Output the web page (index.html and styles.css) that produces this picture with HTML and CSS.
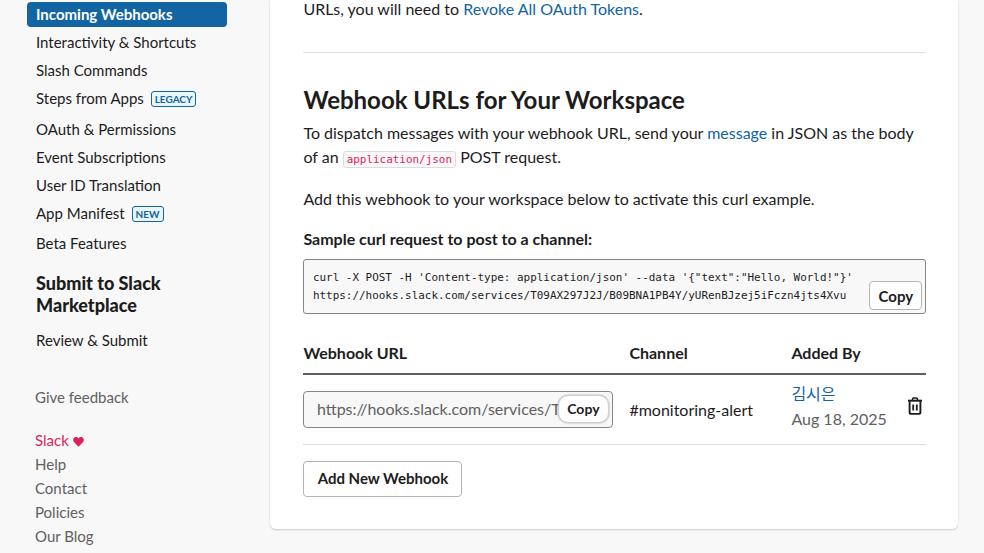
FILE: index.html
```html
<!DOCTYPE html>
<html lang="en">
<head>
    <meta charset="UTF-8">
    <title>Incoming Webhooks</title>
    <link rel="stylesheet" href="styles.css">
</head>
<body>
    <nav class="sidebar">
        <ul class="nav-list">
            <li><a class="nav-link active">Incoming Webhooks</a></li>
            <li><a class="nav-link">Interactivity &amp; Shortcuts</a></li>
            <li><a class="nav-link">Slash Commands</a></li>
            <li class="badge-row"><a class="nav-link">Steps from Apps <span class="tag">LEGACY</span></a></li>
            <li><a class="nav-link">OAuth &amp; Permissions</a></li>
            <li><a class="nav-link">Event Subscriptions</a></li>
            <li><a class="nav-link">User ID Translation</a></li>
            <li class="badge-row"><a class="nav-link">App Manifest <span class="tag">NEW</span></a></li>
            <li><a class="nav-link">Beta Features</a></li>
        </ul>
        <h3 class="nav-title">Submit to Slack Marketplace</h3>
        <a class="nav-link">Review &amp; Submit</a>
        <p class="feedback">Give feedback</p>
        <ul class="footer-list">
            <li class="slack-love">Slack <svg class="heart" viewBox="0 0 12 11" width="11" height="10"><path d="M6 10.6 1.2 5.9C-.3 4.4-.3 2.300 1 1 2.400-.3 4.500-.2 6 1.700 7.500-.2 9.600-.3 11 1c1.300 1.300 1.300 3.400-.2 4.900z"/></svg></li>
            <li>Help</li>
            <li>Contact</li>
            <li>Policies</li>
            <li>Our Blog</li>
        </ul>
    </nav>

    <main class="card">
        <p class="intro">URLs, you will need to <a>Revoke All OAuth Tokens</a>.</p>
        <hr class="rule">
        <h2 class="section-title">Webhook URLs for Your Workspace</h2>
        <p class="body-text">To dispatch messages with your webhook URL, send your <a>message</a> in JSON as the body of an <code class="inline-code">application/json</code> POST request.</p>
        <p class="body-text activate">Add this webhook to your workspace below to activate this curl example.</p>
        <h4 class="sample-title">Sample curl request to post to a channel:</h4>
        <div class="sample-box">
            <pre class="sample-code">curl -X POST -H 'Content-type: application/json' --data '{"text":"Hello, World!"}'
https://hooks.slack.com/services/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</pre>
            <button class="btn copy-sample">Copy</button>
        </div>
        <div class="table-head">
            <span>Webhook URL</span>
            <span>Channel</span>
            <span>Added By</span>
        </div>
        <div class="table-row">
            <div class="url-field">
                <span class="url-text">https://hooks.slack.com/services/T</span>
                <button class="btn copy-url">Copy</button>
            </div>
            <span class="channel">#monitoring-alert</span>
            <div class="added-by">
                <a class="added-name">김시은</a>
                <span class="date">Aug 18, 2025</span>
            </div>
            <svg class="trash" viewBox="0 0 16 18" width="16" height="18" fill="none" stroke="#1d1c1d">
                <path d="M5.500 3V2.200C5.500 1.500 6 1 6.700 1h2.600c.7 0 1.200.5 1.200 1.200V3" stroke-width="1.500"/>
                <path d="M1 3.700h14" stroke-width="2"/>
                <path d="M2.600 4.200v11c0 1 .7 1.700 1.700 1.700h7.400c1 0 1.700-.7 1.700-1.700v-11" stroke-width="1.900"/>
                <path d="M6.200 7.500v6M9.800 7.500v6" stroke-width="1.800"/>
            </svg>
        </div>
        <button class="btn add-webhook">Add New Webhook</button>
    </main>
</body>
</html>
```

FILE: styles.css
```css
html, body {
    height: 553px;
    overflow: hidden;
}
body {
    margin: 0;
    display: flex;
    align-items: flex-start;
    background-color: #f8f8f8;
    color: #1d1c1d;
    font-family: Lato, "Noto Sans CJK KR", sans-serif;
    font-size: 16px;
}
a {
    color: #1264a3;
}

/* sidebar */
.sidebar {
    width: 270px;
    flex-shrink: 0;
    box-sizing: border-box;
    padding: 2px 43px 0 27px;
    font-size: 15px;
}
.nav-list,
.footer-list {
    list-style: none;
    margin: 0;
    padding: 0;
}
.nav-list li {
    margin-bottom: 3px;
}
.nav-list .badge-row {
    margin-bottom: 5.500px;
}
.nav-link {
    display: block;
    padding: 0 9px;
    height: 25px;
    line-height: 25px;
    border-radius: 4px;
    color: #1d1c1d;
    white-space: nowrap;
}
.nav-link.active {
    background-color: #1264a3;
    color: #fff;
    font-weight: 700;
}
.tag {
    display: inline-block;
    margin-left: 3px;
    padding: 0 3px;
    border: 1px solid #1264a3;
    border-radius: 3px;
    background-color: #e8f5fa;
    color: #1264a3;
    font-size: 10px;
    font-weight: 700;
    line-height: 14px;
    vertical-align: 1px;
}
.nav-title {
    margin: 16px 0 12px 9px;
    font-size: 18px;
    font-weight: 900;
    line-height: 22px;
}
.feedback {
    margin: 32px 0 0 8px;
    color: #616061;
    line-height: 24px;
}
.footer-list {
    margin: 19px 0 0 8px;
    color: #616061;
    line-height: 24px;
}
.slack-love {
    color: #e01e5a;
}
.heart {
    fill: #e01e5a;
    vertical-align: -1px;
}

/* main card */
.card {
    width: 688px;
    height: 529px;
    box-sizing: border-box;
    padding: 0 31.600px 0 33.400px;
    background-color: #fff;
    border-radius: 0 0 6px 6px;
    box-shadow: 0 1px 2px rgba(0, 0, 0, 0.2);
}
.intro {
    margin: 0;
    line-height: 17px;
}
.rule {
    margin: 35px 0 0;
    border: 0;
    border-top: 1px solid #e2e2e2;
}
.section-title {
    margin: 32px 0 0;
    font-size: 24px;
    font-weight: 700;
    line-height: 30px;
}
.body-text {
    margin: 6px 0 0;
    line-height: 24px;
}
.activate {
    margin-top: 18px;
}
.inline-code {
    display: inline-block;
    padding: 0 3px;
    border: 1px solid #ddd;
    border-radius: 3px;
    background-color: #f8f8f8;
    color: #e01e5a;
    font-family: "DejaVu Sans Mono", monospace;
    font-size: 10.950px;
    line-height: 15px;
}
.sample-title {
    margin: 16px 0 0;
    font-size: 16px;
    font-weight: 700;
    line-height: 24px;
}
.sample-box {
    position: relative;
    margin-top: 8px;
    height: 53px;
    border: 1px solid #868686;
    border-radius: 3px;
    background-color: #f8f8f8;
}
.sample-code {
    margin: 0;
    padding: 9px 8.500px 0;
    font-family: "DejaVu Sans Mono", monospace;
    font-size: 10.950px;
    line-height: 18px;
}
.btn {
    background-color: #fff;
    border: 1px solid #b5b5b5;
    border-radius: 4px;
    color: #1d1c1d;
    font-family: Lato, sans-serif;
    font-weight: 700;
    cursor: pointer;
}
.copy-sample {
    position: absolute;
    right: 3px;
    bottom: 3px;
    width: 53px;
    height: 29px;
    padding: 0;
    font-size: 15px;
}
.table-head {
    display: grid;
    grid-template-columns: 326px 162px 1fr;
    margin-top: 27px;
    padding-bottom: 8px;
    border-bottom: 2px solid #616061;
    font-weight: 700;
    line-height: 24px;
}
.table-row {
    display: grid;
    grid-template-columns: 326px 162px 116px 1fr;
    align-items: center;
    height: 69px;
    border-bottom: 1px solid #ddd;
}
.url-field {
    position: relative;
    box-sizing: border-box;
    width: 310px;
    height: 37px;
    margin-top: -1px;
    padding-left: 12.500px;
    border: 1px solid #868686;
    border-radius: 4px;
    background-color: #f8f8f8;
    color: #616061;
    line-height: 34px;
    white-space: nowrap;
}
.copy-url {
    position: absolute;
    right: 3.500px;
    top: 3px;
    width: 51px;
    height: 28px;
    padding: 0;
    border-color: #d0d0d0;
    border-radius: 10px;
    font-size: 14px;
    box-shadow: 0 0 2px rgba(0, 0, 0, 0.4);
}
.channel {
    margin-bottom: 1px;
}
.added-by {
    display: flex;
    flex-direction: column;
    margin-bottom: 7px;
}
.added-name {
    height: 24px;
    line-height: 24px;
}
.date {
    color: #616061;
    line-height: 24px;
    margin-top: 1px;
}
.trash {
    justify-self: start;
    margin-bottom: 8px;
}
.add-webhook {
    display: block;
    margin-top: 16px;
    width: 159px;
    height: 36px;
    padding: 0 0 2px;
    font-size: 15px;
}
```
